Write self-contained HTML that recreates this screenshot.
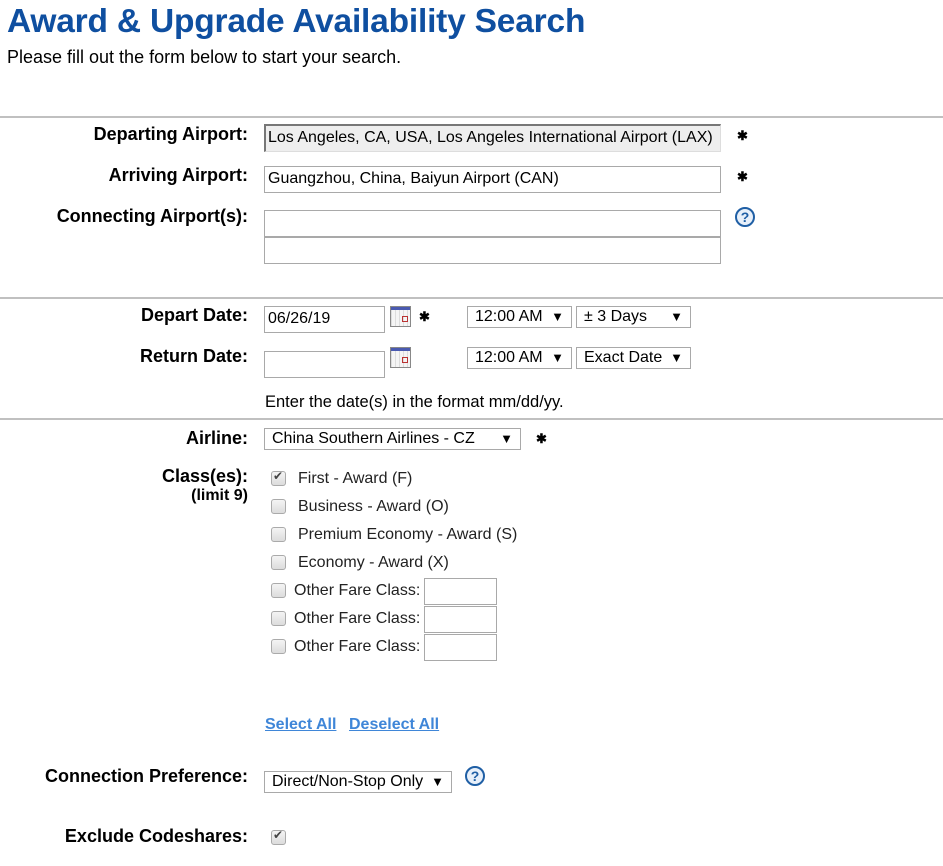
<!DOCTYPE html>
<html><head><style>
body{margin:0;width:943px;height:866px;overflow:hidden;background:#fff;font-family:"Liberation Sans",Arial,sans-serif;color:#000;position:relative}
.a{position:absolute;white-space:nowrap}
h1{position:absolute;left:7px;top:3px;margin:0;font-size:33.5px;font-weight:bold;color:#0f4fa0;letter-spacing:-0.2px}
.hr{position:absolute;left:0;width:943px;height:2px;background:#c0c0c0}
.lbl{position:absolute;right:695px;font-weight:bold;font-size:18px;white-space:nowrap;text-align:right}
.in{position:absolute;box-sizing:border-box;border:1px solid #a9a9a9;background:#fff;font-size:16px;padding:0 3px;line-height:24px;white-space:nowrap;overflow:hidden}
.sel{position:absolute;box-sizing:border-box;border:1px solid #a9a9a9;background:#fff;font-size:16px;padding:0 7px;line-height:19px;white-space:nowrap}
.sel b{position:absolute;right:7px;top:0;font-weight:normal;font-size:13px}
.star{position:absolute;font-size:13px;font-weight:bold}
.cb{position:absolute;box-sizing:border-box;width:15px;height:15px;border:1px solid #aaa;border-radius:3px;background:linear-gradient(#f4f4f4,#dcdcdc)}
.cb.on::after{content:"✔";position:absolute;left:1px;top:-3px;font-size:12px;color:#444}
.t{position:absolute;font-size:16px;white-space:nowrap;color:#222}
.help{position:absolute;width:16px;height:16px;border:2px solid #1f5fa5;border-radius:50%;color:#1f5fa5;font-weight:bold;font-size:14px;text-align:center;line-height:16px;background:#e8f0fa}
.cal{position:absolute;width:21px;height:21px;border:1px solid #888;background:repeating-linear-gradient(90deg,#ddd 0 1px,#f5f5f5 1px 4px),#eee;box-sizing:border-box}
.cal::before{content:"";position:absolute;left:0;right:0;top:0;height:3px;background:#4a5ab0}
.cal::after{content:"";position:absolute;left:11px;top:9px;width:4px;height:4px;border:1px solid #b33}
a{color:#3f86d8;font-weight:bold;font-size:16px;position:absolute}
</style></head><body>
<h1>Award &amp; Upgrade Availability Search</h1>
<div class="a" style="left:7px;top:47px;font-size:18px">Please fill out the form below to start your search.</div>

<div class="hr" style="top:116px"></div>
<div class="lbl" style="top:124px">Departing Airport:</div>
<div class="in" style="left:264px;top:124px;width:457px;height:28px;background:#eee;border-color:#777 #ddd #ddd #777;border-width:2px 1px 1px 2px;line-height:23px;padding-left:2px">Los Angeles, CA, USA, Los Angeles International Airport (LAX)</div>
<div class="star" style="left:737px;top:128px">✱</div>
<div class="lbl" style="top:165px">Arriving Airport:</div>
<div class="in" style="left:264px;top:166px;width:457px;height:27px">Guangzhou, China, Baiyun Airport (CAN)</div>
<div class="star" style="left:737px;top:169px">✱</div>
<div class="lbl" style="top:206px">Connecting Airport(s):</div>
<div class="in" style="left:264px;top:210px;width:457px;height:27px"></div>
<div class="in" style="left:264px;top:237px;width:457px;height:27px"></div>
<div class="help" style="left:735px;top:207px">?</div>

<div class="hr" style="top:297px"></div>
<div class="lbl" style="top:305px">Depart Date:</div>
<div class="in" style="left:264px;top:306px;width:121px;height:27px">06/26/19</div>
<div class="cal" style="left:390px;top:306px"></div>
<div class="star" style="left:419px;top:309px">✱</div>
<div class="sel" style="left:467px;top:306px;width:105px;height:22px">12:00 AM<b>▼</b></div>
<div class="sel" style="left:576px;top:306px;width:115px;height:22px">± 3 Days<b>▼</b></div>
<div class="lbl" style="top:346px">Return Date:</div>
<div class="in" style="left:264px;top:351px;width:121px;height:27px"></div>
<div class="cal" style="left:390px;top:347px"></div>
<div class="sel" style="left:467px;top:347px;width:105px;height:22px">12:00 AM<b>▼</b></div>
<div class="sel" style="left:576px;top:347px;width:115px;height:22px">Exact Date<b>▼</b></div>
<div class="t" style="left:265px;top:393px;color:#000;font-size:16.5px">Enter the date(s) in the format mm/dd/yy.</div>

<div class="hr" style="top:418px"></div>
<div class="lbl" style="top:428px">Airline:</div>
<div class="sel" style="left:264px;top:428px;width:257px;height:22px">China Southern Airlines - CZ<b>▼</b></div>
<div class="star" style="left:536px;top:431px">✱</div>
<div class="lbl" style="top:466px">Class(es):</div>
<div class="lbl" style="top:487px;font-size:16px">(limit 9)</div>

<div class="cb on" style="left:271px;top:471px"></div><div class="t" style="left:298px;top:470px">First - Award (F)</div>
<div class="cb" style="left:271px;top:499px"></div><div class="t" style="left:298px;top:498px">Business - Award (O)</div>
<div class="cb" style="left:271px;top:527px"></div><div class="t" style="left:298px;top:526px">Premium Economy - Award (S)</div>
<div class="cb" style="left:271px;top:555px"></div><div class="t" style="left:298px;top:554px">Economy - Award (X)</div>
<div class="cb" style="left:271px;top:583px"></div><div class="t" style="left:294px;top:582px">Other Fare Class:</div>
<div class="in" style="left:424px;top:578px;width:73px;height:27px"></div>
<div class="cb" style="left:271px;top:611px"></div><div class="t" style="left:294px;top:610px">Other Fare Class:</div>
<div class="in" style="left:424px;top:606px;width:73px;height:27px"></div>
<div class="cb" style="left:271px;top:639px"></div><div class="t" style="left:294px;top:638px">Other Fare Class:</div>
<div class="in" style="left:424px;top:634px;width:73px;height:27px"></div>

<a style="left:265px;top:716px;text-decoration:underline">Select All</a>
<a style="left:349px;top:716px;text-decoration:underline">Deselect All</a>

<div class="lbl" style="top:766px">Connection Preference:</div>
<div class="sel" style="left:264px;top:771px;width:188px;height:22px">Direct/Non-Stop Only<b>▼</b></div>
<div class="help" style="left:465px;top:766px">?</div>
<div class="lbl" style="top:826px">Exclude Codeshares:</div>
<div class="cb on" style="left:271px;top:830px"></div>
</body></html>
